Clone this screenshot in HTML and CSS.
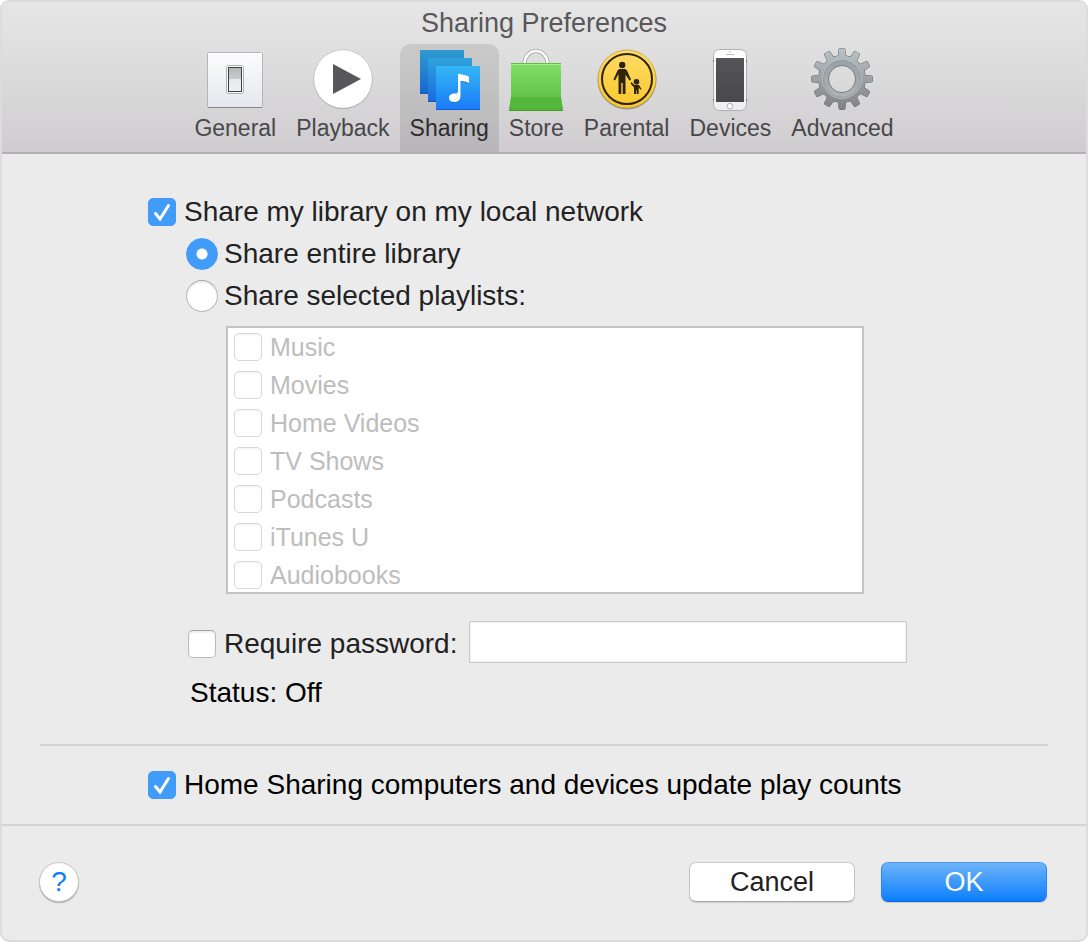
FILE: index.html
```html
<!DOCTYPE html>
<html lang="en">
<head>
  <meta charset="UTF-8" />
  <title>Sharing Preferences</title>
  <meta name="viewport" content="width=device-width, initial-scale=1.0" />
  <link rel="stylesheet" href="styles.css">
</head>
<body>
  <main class="window">
    <header class="toolbar">
      <h1>Sharing Preferences</h1>
      <nav class="tabs" aria-label="Preference panes">
        <button class="tab" type="button">
          <svg viewBox="0 0 64 64" aria-hidden="true">
            <defs>
              <linearGradient id="plate" x2="0" y2="1"><stop stop-color="#fcfcfd"/><stop offset="1" stop-color="#e4e7ec"/></linearGradient>
              <linearGradient id="rocker" x2="0" y2="1"><stop stop-color="#b5b8bb"/><stop offset=".48" stop-color="#c8cbce"/><stop offset=".5" stop-color="#e6eaee"/><stop offset="1" stop-color="#edf1f4"/></linearGradient>
            </defs>
            <rect x="4.5" y="4.5" width="55" height="55" rx="1" fill="url(#plate)" stroke="#b4b5b8"/>
            <path d="M5 59.5h54" stroke="#85868a"/>
            <rect x="23.5" y="17.5" width="17" height="28" rx="2" fill="#f8f8f8" stroke="#b2b2b5"/>
            <rect x="25.5" y="19.5" width="13" height="24" fill="url(#rocker)" stroke="#3e4042"/>
          </svg>
          <span>General</span>
        </button>
        <button class="tab" type="button">
          <svg viewBox="0 0 64 64" aria-hidden="true">
            <circle cx="32" cy="31.5" r="29.5" fill="#9b9b9d"/>
            <circle cx="32" cy="31" r="29.3" fill="#fff" stroke="#bcbcbe" stroke-width=".7"/>
            <path d="M22 16v30l28-15z" fill="#58585a"/>
          </svg>
          <span>Playback</span>
        </button>
        <button class="tab active" type="button" aria-current="page">
          <svg viewBox="0 0 64 64" aria-hidden="true">
            <defs>
              <linearGradient id="blueBack" x2="0" y2="1"><stop stop-color="#2f9bd0"/><stop offset="1" stop-color="#1765d2"/></linearGradient>
              <linearGradient id="blueMid" x2="0" y2="1"><stop stop-color="#30a3da"/><stop offset="1" stop-color="#186bdc"/></linearGradient>
              <linearGradient id="blueFront" x2="0" y2="1"><stop stop-color="#34b7f5"/><stop offset="1" stop-color="#1a7af8"/></linearGradient>
              <path id="note" d="M41 27c0-1 1-1.500 2-1l7 1.800c1.500.400 2 1 2 2.500v5c-2-1.800-4-1.800-8.500-2.300v15c0 4-2.500 6-6.500 6-3 0-5-1.500-5-4 0-3 2.500-4.500 5.500-4.500 2 0 3.500-.200 3.500-2z"/>
            </defs>
            <rect x="3" y="2" width="44" height="44" fill="url(#blueBack)"/>
            <path d="M3 45.5h44" stroke="#1456b8"/>
            <rect x="11" y="10" width="44" height="44" fill="url(#blueMid)"/>
            <path d="M11 53.5h44" stroke="#1456b8"/>
            <rect x="19" y="18" width="44" height="44" fill="url(#blueFront)"/>
            <path d="M19 61.5h44" stroke="#1560d0"/>
            <use href="#note" y="1" fill="#1565c4" opacity=".6"/>
            <use href="#note" fill="#fff"/>
          </svg>
          <span>Sharing</span>
        </button>
        <button class="tab" type="button">
          <svg viewBox="0 0 64 64" aria-hidden="true">
            <defs>
              <linearGradient id="bag" x2="0" y2="1"><stop stop-color="#82df68"/><stop offset="1" stop-color="#58b93e"/></linearGradient>
            </defs>
            <path d="M20.5 15a11.5 12 0 0 1 23 0" fill="none" stroke="#a4a4a6" stroke-width="4"/>
            <path d="M20.5 15a11.5 12 0 0 1 23 0" fill="none" stroke="#fff" stroke-width="2.5"/>
            <path d="M7 15h50v34l2 14H5l2-14z" fill="url(#bag)"/>
            <path d="M7 49h50l2 14H5z" fill="#54b63b"/>
            <path d="M7 15.5h50" stroke="#5fc047"/>
            <path d="M7 16.5h50" stroke="#a2ec8d"/>
            <path d="M5 62.5h54" stroke="#439b2e"/>
          </svg>
          <span>Store</span>
        </button>
        <button class="tab" type="button">
          <svg viewBox="0 0 64 64" aria-hidden="true">
            <defs>
              <linearGradient id="sign" x2="0" y2="1"><stop stop-color="#ffdc68"/><stop offset="1" stop-color="#fbc72c"/></linearGradient>
            </defs>
            <circle cx="32" cy="32" r="29.5" fill="#96938a"/>
            <circle cx="32" cy="31" r="29" fill="url(#sign)" stroke="#c6a446" stroke-width=".8"/>
            <circle cx="32" cy="31" r="25" fill="none" stroke="#2d2508" stroke-width="2"/>
            <g fill="#2d2508">
              <circle cx="27.2" cy="17" r="3.2"/>
              <path d="M24 21h6.500l1.500 1.500 4 9-1.300 1.200-4.200-6v19.300h-2.800V35h-1.400v11H23.500V26l-3.500 6.500-1.500-1 4-9z"/>
              <circle cx="41.5" cy="33.7" r="2.8"/>
              <path d="M36.3 34l3.200 3h4.500l2.500 4-1 .8-1.800-2.300V46h-2v-3.500h-.7V46h-2v-6.500l-3.400-4z"/>
            </g>
          </svg>
          <span>Parental</span>
        </button>
        <button class="tab" type="button">
          <svg viewBox="0 0 64 64" aria-hidden="true">
            <defs>
              <linearGradient id="screen" x2="0" y2="1"><stop stop-color="#555557"/><stop offset="1" stop-color="#49494b"/></linearGradient>
              <linearGradient id="phone" x2="0" y2="1"><stop stop-color="#fff"/><stop offset="1" stop-color="#eee"/></linearGradient>
            </defs>
            <rect x="15.5" y="1.5" width="33" height="61" rx="6" fill="url(#phone)" stroke="#b0b0b2"/>
            <path d="M15.5 12v2M15.5 51v2M48.5 12v2M48.5 51v2" stroke="#77777a"/>
            <rect x="18" y="10" width="28" height="44" fill="url(#screen)"/>
            <path d="M28 6.500h8" stroke="#bbb"/>
            <circle cx="32" cy="3.8" r=".8" fill="#bbb"/>
            <circle cx="32" cy="58.2" r="2.8" fill="#fff" stroke="#b0b0b0"/>
          </svg>
          <span>Devices</span>
        </button>
        <button class="tab" type="button">
          <svg viewBox="0 0 64 64" aria-hidden="true">
            <defs>
              <linearGradient id="steel" x2="0" y2="1"><stop stop-color="#b9c4ca"/><stop offset=".6" stop-color="#96999b"/><stop offset="1" stop-color="#7e7f81"/></linearGradient>
              <linearGradient id="ring" x2="0" y2="1"><stop stop-color="#98a3a9"/><stop offset="1" stop-color="#aeb0b2"/></linearGradient>
              <path id="tooth" d="M26 9.500l2.500-2 .5-6q.1-1 1-1h4q.9 0 1 1l.5 6 2.500 2z"/>
              <g id="gear">
                <circle cx="32" cy="31" r="23.5"/>
                <use href="#tooth"/>
                <use href="#tooth" transform="rotate(30 32 31)"/>
                <use href="#tooth" transform="rotate(60 32 31)"/>
                <use href="#tooth" transform="rotate(90 32 31)"/>
                <use href="#tooth" transform="rotate(120 32 31)"/>
                <use href="#tooth" transform="rotate(150 32 31)"/>
                <use href="#tooth" transform="rotate(180 32 31)"/>
                <use href="#tooth" transform="rotate(210 32 31)"/>
                <use href="#tooth" transform="rotate(240 32 31)"/>
                <use href="#tooth" transform="rotate(270 32 31)"/>
                <use href="#tooth" transform="rotate(300 32 31)"/>
                <use href="#tooth" transform="rotate(330 32 31)"/>
              </g>
              <mask id="hole"><rect width="64" height="64" fill="#fff"/><circle cx="32" cy="31" r="13.3" fill="#000"/></mask>
              <mask id="gearShape"><use href="#gear" fill="#fff"/></mask>
            </defs>
            <g mask="url(#hole)">
              <use href="#gear" fill="#6e7174" stroke="#6e7174"/>
              <rect width="64" height="64" fill="url(#steel)" mask="url(#gearShape)"/>
              <circle cx="32" cy="31" r="16" fill="none" stroke="url(#ring)" stroke-width="6"/>
              <circle cx="32" cy="31" r="19.5" fill="none" stroke="#bcc3c7" stroke-width=".8"/>
              <circle cx="32" cy="31" r="18.5" fill="none" stroke="#8d9295" stroke-width=".6"/>
            </g>
            <circle cx="32" cy="31" r="13.5" fill="none" stroke="#7b7f82"/>
          </svg>
          <span>Advanced</span>
        </button>
      </nav>
    </header>

    <form class="prefs" id="prefs">
      <section class="pane">
        <label class="row"><input type="checkbox" checked> Share my library on my local network</label>
        <label class="row indent"><input type="radio" name="share" checked> Share entire library</label>
        <label class="row indent"><input type="radio" name="share"> Share selected playlists:</label>

        <fieldset class="playlists" aria-label="Playlists" disabled>
          <label><input type="checkbox"> Music</label>
          <label><input type="checkbox"> Movies</label>
          <label><input type="checkbox"> Home Videos</label>
          <label><input type="checkbox"> TV Shows</label>
          <label><input type="checkbox"> Podcasts</label>
          <label><input type="checkbox"> iTunes U</label>
          <label><input type="checkbox"> Audiobooks</label>
        </fieldset>

        <div class="password">
          <label class="row"><input type="checkbox"> Require password:</label>
          <input class="field" type="password" aria-label="Password">
        </div>
        <p class="status">Status: Off</p>
      </section>
      <section class="pane home-sharing">
        <label class="row"><input type="checkbox" checked> Home Sharing computers and devices update play counts</label>
      </section>
    </form>

    <footer class="actions">
      <button class="help" type="button" aria-label="Help">?</button>
      <button class="btn" type="button">Cancel</button>
      <button class="btn primary" type="submit" form="prefs">OK</button>
    </footer>
  </main>
</body>
</html>
```
FILE: styles.css
```css
:root {
  --blue: #419bf9;
  --line: #d3d3d3;
}
* {
  box-sizing: border-box;
}
body {
  margin: 0;
  background: #fff;
  color: #222;
  font-family: "Liberation Sans", Helvetica, Arial, sans-serif;
  font-size: 28px;
}
button, input {
  font-family: inherit;
  margin: 0;
}
.window {
  min-height: 100vh;
  display: flex;
  flex-direction: column;
  background: #ebebeb;
  border: 2px solid #dcdcdc;
  border-radius: 9px;
  overflow: hidden;
}

/* toolbar */
.toolbar {
  background: linear-gradient(#e7e6e7, #dddcdd 45%, #cfcdcf);
  border-bottom: 2px solid #b3b1b3;
}
h1 {
  margin: 0;
  padding-top: 1px;
  font-size: 27px;
  font-weight: normal;
  line-height: 41px;
  text-align: center;
  color: #58575a;
}
.tabs {
  display: flex;
  justify-content: center;
}
.tab {
  display: flex;
  flex-direction: column;
  align-items: center;
  padding: 4px 10px 8px;
  border: 0;
  border-radius: 10px 10px 0 0;
  background: none;
  color: #48474a;
  font-size: 23px;
  line-height: 32px;
}
.tab svg {
  width: 64px;
  height: 64px;
  margin: 0 -5px;
}
.tab.active {
  background: linear-gradient(#cacaca, #b8b6b8);
  color: #2c2b2d;
}

/* settings */
.prefs {
  flex: 1;
}
.pane {
  padding: 37px 146px 30px;
}
.row {
  display: flex;
  align-items: center;
  gap: 8px;
  height: 42px;
  white-space: nowrap;
}
.indent {
  margin-left: 38px;
  gap: 6px;
}
input[type="checkbox"], input[type="radio"] {
  appearance: none;
  flex: none;
  width: 28px;
  height: 28px;
  border: 1px solid #b9b9b9;
  border-top-color: #a3a3a3;
  border-radius: 5px;
  background: #fff;
  box-shadow: inset 0 2px 2px #eee;
}
input[type="radio"] {
  width: 32px;
  height: 32px;
  border-radius: 50%;
}
input[type="checkbox"]:checked {
  border-color: var(--blue);
  background: var(--blue) url('data:image/svg+xml,<svg xmlns="http://www.w3.org/2000/svg" viewBox="0 0 28 28"><path d="M7.500 15.500l4.500 5.500 8.500-13.500" fill="none" stroke="white" stroke-width="3" stroke-linecap="round"/></svg>') center / 28px;
  box-shadow: none;
}
input[type="radio"]:checked {
  border-color: var(--blue);
  background: radial-gradient(circle, #fff 5px, var(--blue) 6px);
  box-shadow: none;
}
.playlists {
  display: flex;
  flex-direction: column;
  gap: 10px;
  margin: 9px 76px 0 78px;
  padding: 5px 6px 3px;
  border: 2px solid #c3c3c3;
  background: #fff;
  color: #bdbdbd;
  font-size: 25px;
}
.playlists label {
  display: flex;
  align-items: center;
  gap: 8px;
  height: 28px;
}
.playlists input[type="checkbox"] {
  border-color: #d8d8d8;
  box-shadow: inset 0 2px 2px #f6f6f6;
}
.password {
  display: flex;
  align-items: flex-end;
  gap: 12px;
  margin: 27px 33px 0 40px;
}
.password .row {
  height: 38px;
}
.field {
  flex: 1;
  min-width: 0;
  height: 42px;
  padding: 0 8px;
  border: 1px solid #cbcbcb;
  border-radius: 0;
  background: #fff;
  box-shadow: inset 0 0 0 1px #f1f1f1;
  font-size: 28px;
}
.status {
  margin: 9px 0 0 42px;
  line-height: 42px;
  color: #000;
}
.home-sharing {
  margin: 0 38px;
  padding: 18px 108px;
  border-top: 2px solid var(--line);
  color: #000;
}

/* bottom buttons */
.actions {
  display: flex;
  align-items: center;
  gap: 26px;
  padding: 36px 39px 38px 37px;
  border-top: 2px solid var(--line);
}
.help {
  width: 40px;
  height: 40px;
  margin-right: auto;
  padding: 0;
  border: 1px solid #c6c6c6;
  border-radius: 50%;
  background: #fff;
  box-shadow: 0 1px 1px #aaa;
  color: #0b7dfc;
  font-size: 28px;
}
.btn {
  width: 166px;
  height: 40px;
  padding: 0;
  border: 1px solid #c8c8c8;
  border-bottom-color: #ababab;
  border-radius: 7px;
  background: #fff;
  box-shadow: 0 1px 1px #ccc;
  color: #222;
  font-size: 27px;
}
.btn.primary {
  border-color: #4d9ff0 #2b84f0 #0867f0;
  background: linear-gradient(#6cb4f9, #0d7efd);
  color: #fff;
}
```
